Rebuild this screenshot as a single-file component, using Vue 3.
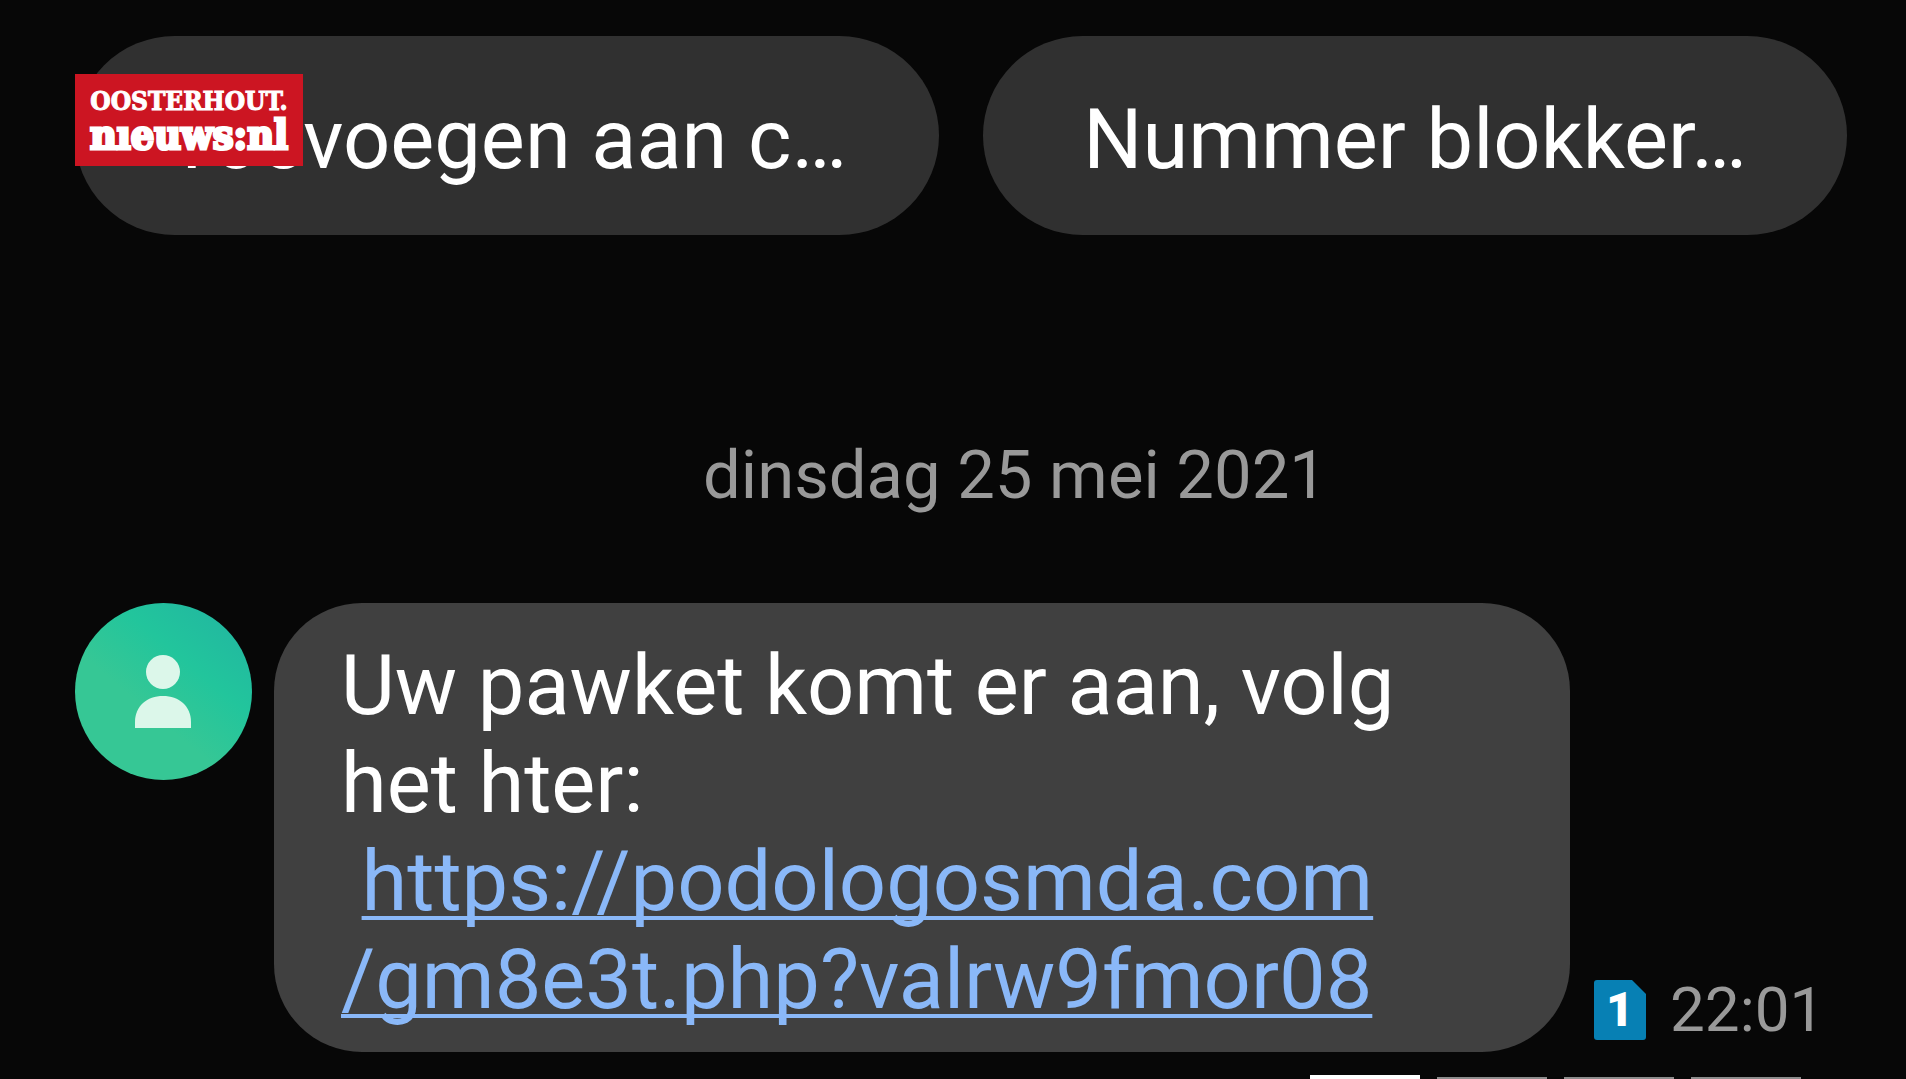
<template>
  <main class="page">
    <div class="logo">
      <span class="logo-city">OOSTERHOUT.</span>
      <span class="logo-news">nıeuws:nl</span>
    </div>

    <div class="actions">
      <button v-for="action in actions" :key="action" type="button" class="action">{{ action }}</button>
    </div>

    <time class="date" datetime="2021-05-25">dinsdag 25 mei 2021</time>

    <section class="message">
      <div class="avatar">
        <svg viewBox="0 0 177 177" aria-hidden="true">
          <circle cx="88" cy="69" r="17" />
          <path d="M60 125v-6c0-16 12-26 28-26s28 10 28 26v6z" />
        </svg>
      </div>
      <p class="bubble">Uw pawket komt er aan, volg<br />het hter:<br />&nbsp;<a :href="url">https://podologosmda.com<br />/gm8e3t.php?valrw9fmor08</a></p>
      <div class="meta">
        <div class="sim">
          <svg viewBox="0 0 52 60" aria-hidden="true">
            <path d="M3 0h35l14 14v43a3 3 0 0 1-3 3H3a3 3 0 0 1-3-3V3a3 3 0 0 1 3-3z" />
          </svg>
          <span>1</span>
        </div>
        <time class="clock" datetime="22:01">22:01</time>
      </div>
    </section>

    <div class="tabs">
      <span v-for="n in 4" :key="n" class="tab" :class="{ active: n === 1 }"></span>
    </div>
  </main>
</template>

<script setup>
import { ref } from 'vue'

const actions = ref(['Toevoegen aan c…', 'Nummer blokker…'])
const url = 'https://podologosmda.com/gm8e3t.php?valrw9fmor08'
</script>

<style scoped>
.page {
  position: relative;
  display: flex;
  flex-direction: column;
  min-height: 100vh;
  padding: 36px 59px 0 75px;
  box-sizing: border-box;
  overflow: hidden;
  background-color: #070707;
  color: #fff;
  font-family: Roboto, 'Liberation Sans', sans-serif;
}

/* Logo lies over the first button */
.logo {
  position: absolute;
  top: 74px;
  left: 75px;
  z-index: 1;
  display: flex;
  flex-direction: column;
  align-items: center;
  width: 228px;
  height: 92px;
  padding-top: 13px;
  box-sizing: border-box;
  background-color: #cc1522;
  font-family: 'DejaVu Serif Condensed', 'DejaVu Serif', serif;
  font-weight: bold;
  white-space: nowrap;
}

.logo-city {
  font-size: 26px;
  line-height: 28px;
  -webkit-text-stroke: 1px #fff;
}

.logo-news {
  font-size: 41px;
  line-height: 40px;
  -webkit-text-stroke: 3px #fff;
}

.actions {
  display: grid;
  grid-template-columns: 1fr 1fr;
  gap: 44px;
}

.action {
  height: 199px;
  padding: 8px 0 0;
  border: none;
  border-radius: 100px;
  background-color: #303030;
  color: #fff;
  font-family: inherit;
  font-size: 83px;
  white-space: nowrap;
  cursor: pointer;
}

.date {
  margin-top: 200px;
  padding-left: 108px;
  color: #999;
  font-size: 67px;
  line-height: 80px;
  text-align: center;
}

.message {
  display: flex;
  align-items: flex-start;
  margin-top: 88px;
}

.avatar {
  flex: none;
  width: 177px;
  height: 177px;
  border-radius: 50%;
  background: linear-gradient(220deg, #22b8a0 10%, #22c59c 35%, #36c795 60%);
}

.avatar svg {
  display: block;
  fill: #dcf7ea;
}

.bubble {
  flex: 1;
  margin: 0 0 0 22px;
  padding: 34px 0 23px 67px;
  border-radius: 88px;
  background-color: #404040;
  font-size: 83px;
  line-height: 98px;
  white-space: nowrap;
}

.bubble a {
  color: #8ab8f8;
  text-decoration-thickness: 4px;
  text-underline-offset: 6px;
  text-decoration-skip-ink: none;
}

.meta {
  display: flex;
  align-self: flex-end;
  align-items: center;
  gap: 24px;
  width: 277px;
  padding: 0 0 7px 24px;
  box-sizing: border-box;
}

.sim {
  display: grid;
  width: 52px;
  height: 60px;
  font-size: 48px;
  font-weight: 900;
  line-height: 60px;
  text-align: center;
}

.sim svg,
.sim span {
  grid-area: 1 / 1;
}

.sim svg {
  fill: #0780b4;
}

.clock {
  color: #999;
  font-size: 62px;
  line-height: 70px;
}

.tabs {
  display: flex;
  justify-content: flex-end;
  align-items: flex-end;
  gap: 17px;
  height: 4px;
  margin-top: auto;
  padding-right: 46px;
}

.tab {
  width: 110px;
  height: 2px;
  background-color: #8c8c8c;
}

.tab.active {
  height: 4px;
  background-color: #fff;
}
</style>

<style>
body {
  background-color: #070707;
}
</style>
